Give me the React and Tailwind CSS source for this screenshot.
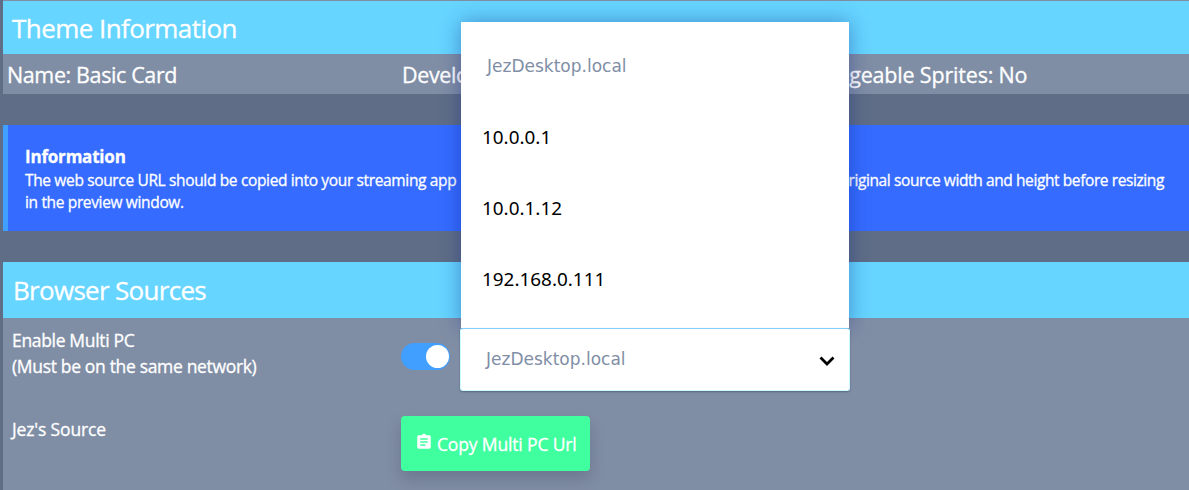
import { useState } from 'react'

const HOSTS = ['10.0.0.1', '10.0.1.12', '192.168.0.111']

function ClipboardIcon() {
  return (
    <svg viewBox="0 0 24 24" fill="currentColor" className="w-[18px] h-[18px] shrink-0 -mt-[5px]">
      <path d="M19 3h-4.18C14.4 1.84 13.3 1 12 1s-2.4.84-2.82 2H5c-1.1 0-2 .9-2 2v14c0 1.1.9 2 2 2h14c1.1 0 2-.9 2-2V5c0-1.1-.9-2-2-2zm-5 14H7v-2h7v2zm3-4H7v-2h10v2zm0-4H7V7h10v2z" />
    </svg>
  )
}

function HostSelect({ value, onChange }) {
  const [open, setOpen] = useState(true)

  const pick = (host) => {
    onChange(host)
    setOpen(false)
  }

  return (
    <div className="relative w-[390px] shrink-0 [-webkit-text-stroke:0]">
      {open && (
        <ul className="absolute bottom-full left-px w-[388px] h-[306px] pt-[8px] bg-white text-black shadow-[0_0_20px_rgba(10,30,130,0.4)] flex flex-col">
          <li className="h-[71px] pl-[26px] flex items-center font-['DejaVu_Sans'] text-[17px] text-[#808ea6]">{value}</li>
          {HOSTS.map((host) => (
            <li key={host} onClick={() => pick(host)} className="h-[71px] pl-[21px] flex items-center font-['Noto_Sans'] text-[18.900px]">{host}</li>
          ))}
        </ul>
      )}
      <button onClick={() => setOpen(!open)}
        className="relative w-full h-[63px] pl-[25px] pr-[14px] flex items-center justify-between bg-white border border-[#c9fbff] border-t-[#85ccff] rounded-[3px] shadow-[0_1px_2px_rgba(20,30,50,0.35)]">
        <span className="font-['DejaVu_Sans'] text-[17px] text-[#808ea6] -mt-[2px]">{value}</span>
        <svg viewBox="0 0 16 12" fill="none" stroke="#000" strokeWidth="2.8" className="w-4 h-3 mt-[3px]">
          <path d="M1.5 2.5 8 9l6.500-6.500" />
        </svg>
      </button>
    </div>
  )
}

export default function App() {
  const [host, setHost] = useState('JezDesktop.local')
  const [multiPc, setMultiPc] = useState(true)

  return (
    <div className="w-full h-[490px] overflow-hidden bg-[#5f6e86] pl-[3px] flex flex-col font-['Open_Sans',sans-serif] text-white [-webkit-text-stroke:0.3px]">
      <section className="bg-[#808ea5] pt-px">
        <h2 className="h-[53px] pl-[9px] pt-[2px] flex items-center bg-[#66d5ff] text-[26px] tracking-[-0.560px]">Theme Information</h2>
        <div className="h-10 grid grid-cols-[395px_396px_1fr] items-center pl-1 pt-[2px] text-[21.500px] tracking-[-0.380px] whitespace-nowrap">
          <p>Name: Basic Card</p>
          <p>Developer: Jez</p>
          <p className="tracking-[-0.180px]">Changeable Sprites: No</p>
        </div>
      </section>

      <section className="mt-[31px] h-[106px] bg-[#356cff] border-l-[5px] border-[#409fff] pl-[17px] pr-[25px] pt-[21px] text-[15.500px] leading-[22px] tracking-[-0.350px]">
        <h3 className="font-bold text-[17px] tracking-[-0.2px]">Information</h3>
        <p className="flex justify-between whitespace-nowrap mt-px">
          <span>The web source URL should be copied into your streaming app</span>
          <span className="tracking-[-0.4px]">original source width and height before resizing</span>
        </p>
        <p>in the preview window.</p>
      </section>

      <section className="mt-[31px] flex-1 bg-[#808ea5]">
        <h2 className="h-14 pl-[10px] pt-px flex items-center bg-[#66d5ff] text-[26px] tracking-[-0.700px]">Browser Sources</h2>
        <div className="flex pl-2 pt-[10px] h-[98px] text-[17.500px] leading-[26px]">
          <div className="w-[390px] pl-px -mt-px tracking-[-0.330px]">
            <p>Enable Multi PC</p>
            <p>(Must be on the same network)</p>
          </div>
          <button onClick={() => setMultiPc(!multiPc)} className="mt-[15px] w-[49px] h-[27px] py-[2px] pr-px rounded-full bg-[#409fff] flex items-center justify-end shrink-0">
            <span className="w-[23px] h-[23px] rounded-full bg-white" />
          </button>
          <div className="ml-[10px]">
            <HostSelect value={host} onChange={setHost} />
          </div>
        </div>
        <div className="flex pl-2 text-[17.500px]">
          <p className="w-[390px] pl-px tracking-[-0.150px]">Jez's Source</p>
          <button className="w-[189px] h-[55px] pl-[14px] pt-px flex items-center gap-[4px] rounded-[4px] bg-[#3fff9f] shadow-[0_8px_16px_rgba(20,30,50,0.2)] whitespace-nowrap tracking-[-0.150px]">
            <ClipboardIcon />
            Copy Multi PC Url
          </button>
        </div>
      </section>
    </div>
  )
}
